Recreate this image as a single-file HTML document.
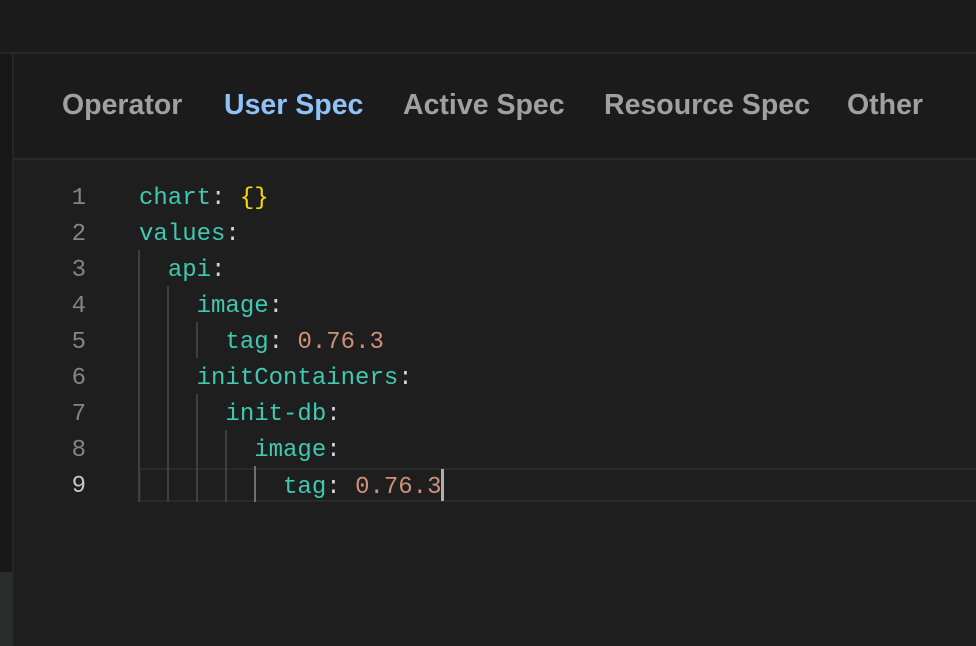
<!DOCTYPE html>
<html><head><style>
html,body{margin:0;padding:0;width:976px;height:646px;overflow:hidden;background:#1e1e1e;}
.top{position:absolute;left:0;top:0;width:976px;height:52px;background:#1b1b1b;border-bottom:2px solid #262626;}
.left{position:absolute;left:0;top:54px;width:12px;height:592px;background:#181818;border-right:2px solid #262626;}
.left .b{position:absolute;left:0;top:518px;width:12px;height:74px;background:#2a2d2d;}
.tabs{position:absolute;left:14px;top:54px;width:962px;height:104px;background:#1b1b1b;border-bottom:2px solid #2a2a2a;}
.tab{position:absolute;top:35px;font:bold 28.5px "Liberation Sans",sans-serif;color:#a0a0a0;white-space:nowrap;}
.ed{position:absolute;left:14px;top:160px;width:962px;height:486px;background:#1e1e1e;}
.ln{position:absolute;left:0;width:72px;text-align:right;font:24px "Liberation Mono",monospace;color:#858585;line-height:36px;}
.code{position:absolute;left:125px;font:24px "Liberation Mono",monospace;line-height:36px;white-space:pre;color:#d4d4d4;}
.k{color:#3ec9b0}.n{color:#ce9178}.y{color:#ffd700}
.g{position:absolute;width:2px;background:#404040;}
.cur{position:absolute;left:125px;top:308px;width:837px;height:30px;border:2px solid #2a2a2a;}
</style></head><body>
<div class="top"></div>
<div class="left"><div class="b"></div></div>
<div class="tabs">
<span class="tab" style="left:48px">Operator</span>
<span class="tab" style="left:210px;color:#8ec2f8">User Spec</span>
<span class="tab" style="left:389px">Active Spec</span>
<span class="tab" style="left:590px">Resource Spec</span>
<span class="tab" style="left:833px">Other</span>
</div>
<div class="ed">
<div class="cur"></div>
<div class="g" style="left:124px;top:90px;height:252px"></div>
<div class="g" style="left:153px;top:126px;height:216px"></div>
<div class="g" style="left:182px;top:162px;height:36px"></div>
<div class="g" style="left:182px;top:234px;height:108px"></div>
<div class="g" style="left:211px;top:270px;height:72px"></div>
<div class="g" style="left:240px;top:306px;height:36px;background:#707070"></div>
<div class="ln" style="top:21px">1<br>2<br>3<br>4<br>5<br>6<br>7<br>8<br><span style="color:#c6c6c6">9</span></div>
<div class="code" style="top:21px"><span class="k">chart</span>: <span class="y">{}</span>
<span class="k">values</span>:
  <span class="k">api</span>:
    <span class="k">image</span>:
      <span class="k">tag</span>: <span class="n">0.76.3</span>
    <span class="k">initContainers</span>:
      <span class="k">init-db</span>:
        <span class="k">image</span>:
          <span class="k">tag</span>: <span class="n">0.76.3</span><span style="display:inline-block;width:3px;height:32px;background:#aeafad;vertical-align:-8px"></span></div>
</div>
</body></html>
